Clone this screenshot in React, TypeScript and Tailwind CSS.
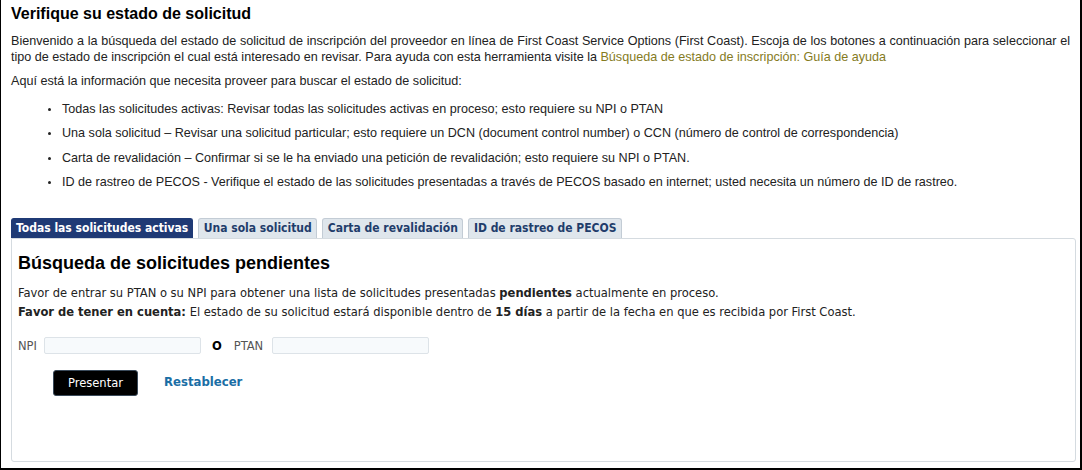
import { useState } from "react";

const tabs = [
  "Todas las solicitudes activas",
  "Una sola solicitud",
  "Carta de revalidación",
  "ID de rastreo de PECOS",
];

const items = [
  "Todas las solicitudes activas: Revisar todas las solicitudes activas en proceso; esto requiere su NPI o PTAN",
  "Una sola solicitud – Revisar una solicitud particular; esto requiere un DCN (document control number) o CCN (número de control de correspondencia)",
  "Carta de revalidación – Confirmar si se le ha enviado una petición de revalidación; esto requiere su NPI o PTAN.",
  "ID de rastreo de PECOS - Verifique el estado de las solicitudes presentadas a través de PECOS basado en internet; usted necesita un número de ID de rastreo.",
];

export default function App() {
  const [active, setActive] = useState(0);

  return (
    <div className="w-[1082px] h-[470px] bg-white border-l border-r-2 border-b-2 border-black overflow-hidden font-['Liberation_Sans',Arial,sans-serif] text-[#222]">
      <div className="pl-[10px] pr-[4px] pt-[4px]">
        {/* Heading */}
        <h1 className="text-[16px] leading-[20px] font-bold text-black">
          Verifique su estado de solicitud
        </h1>
        <p className="mt-[9px] pr-[6px] text-[12.6px] leading-[16px] text-justify">
          Bienvenido a la búsqueda del estado de solicitud de inscripción del proveedor en línea de First Coast Service
          Options (First Coast). Escoja de los botones a continuación para seleccionar el tipo de estado de inscripción el
          cual está interesado en revisar. Para ayuda con esta herramienta visite la{" "}
          <a href="#" className="text-[#857b1e]">
            Búsqueda de estado de inscripción: Guía de ayuda
          </a>
        </p>
        <p className="mt-[8px] text-[12.6px] leading-[16px]">
          Aquí está la información que necesita proveer para buscar el estado de solicitud:
        </p>

        {/* Info list */}
        <ul className="mt-[12px] pl-[50px] list-disc text-[12.6px] leading-[16px] marker:text-[10px]">
          {items.map((t) => (
            <li key={t} className="mb-[8.3px] pl-[1px]">
              {t}
            </li>
          ))}
        </ul>

        {/* Tabs */}
        <div className="mt-[28px] flex gap-[5px] font-['DejaVu_Sans_Condensed','DejaVu_Sans',sans-serif] text-[12px] font-bold">
          {tabs.map((t, i) => (
            <button
              key={t}
              onClick={() => setActive(i)}
              className={
                i === active
                  ? "h-[20px] px-[4px] rounded-t-[3px] bg-[#1f3a75] text-white border border-[#1f3a75] border-b-0"
                  : "h-[20px] px-[4.5px] rounded-t-[3px] bg-[#dfe6ec] text-[#1f3d6b] border border-[#c3ccd5] border-b-0"
              }
            >
              {t}
            </button>
          ))}
        </div>

        {/* Panel */}
        <div className="h-[224px] border border-[#d5dbe0] rounded-b-[3px] rounded-tr-[3px] px-[6px] pt-[13px] font-['DejaVu_Sans_Condensed','DejaVu_Sans',sans-serif] text-[12.8px] text-[#222]">
          <h2 className="font-['Liberation_Sans',Arial,sans-serif] text-[18px] leading-[22px] font-bold text-black">
            Búsqueda de solicitudes pendientes
          </h2>
          <p className="mt-[9px] leading-[19px]">
            Favor de entrar su PTAN o su NPI para obtener una lista de solicitudes presentadas{" "}
            <b>pendientes</b> actualmente en proceso.
          </p>
          <p className="leading-[20px]">
            <b>Favor de tener en cuenta:</b> El estado de su solicitud estará disponible dentro de <b>15 días</b> a
            partir de la fecha en que es recibida por First Coast.
          </p>

          {/* Form */}
          <div className="mt-[14px] flex items-center">
            <label className="text-[#555]">NPI</label>
            <input className="ml-[7px] w-[157px] h-[17px] border border-[#dde3e8] rounded-[2px] bg-[#f7fafc]" />
            <span className="ml-[11px] font-bold text-black">O</span>
            <label className="ml-[12px] text-[#555]">PTAN</label>
            <input className="ml-[9px] w-[157px] h-[17px] border border-[#dde3e8] rounded-[2px] bg-[#f7fafc]" />
          </div>
          <div className="mt-[15px] ml-[35px] flex items-center gap-[26px]">
            <button className="w-[85px] h-[26px] bg-black text-white rounded-[3px] border border-[#3a4a5a]">
              Presentar
            </button>
            <a href="#" className="font-bold text-[13px] text-[#1a6ea5] -mt-[3px]">
              Restablecer
            </a>
          </div>
        </div>
      </div>
    </div>
  );
}
